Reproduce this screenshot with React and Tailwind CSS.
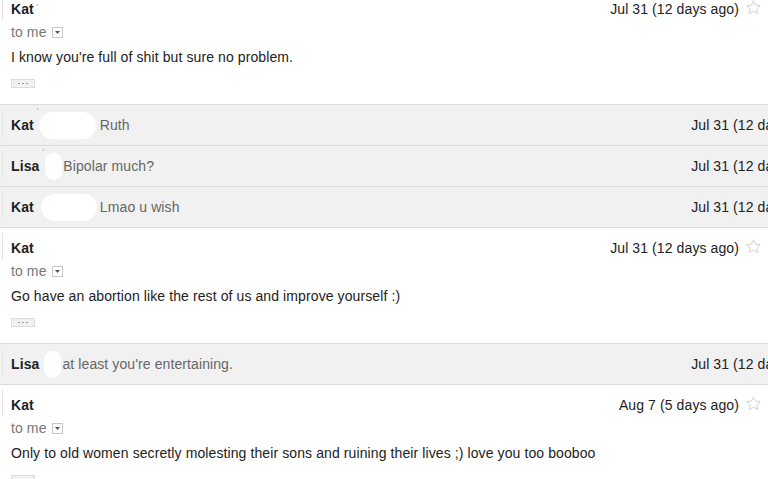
import React from 'react';

const messages = [
    { type: 'open', name: 'Kat', mark: true, date: 'Jul 31 (12 days ago)', body: "I know you're full of shit but sure no problem." },
    { type: 'closed', name: 'Kat', mark: true, blob: 'w-[57px]', gap: 'ml-0', sgap: 'ml-[4px]', snippet: 'Ruth', date: 'Jul 31 (12 days ago)' },
    { type: 'closed', name: 'Lisa', mark: true, blob: 'w-[17px]', gap: 'ml-[1px]', sgap: 'ml-[1px]', snippet: 'Bipolar much?', date: 'Jul 31 (12 days ago)' },
    { type: 'closed', name: 'Kat', blob: 'w-[56px]', gap: 'ml-[7px]', sgap: 'ml-[3px]', snippet: 'Lmao u wish', date: 'Jul 31 (12 days ago)' },
    { type: 'open', name: 'Kat', date: 'Jul 31 (12 days ago)', body: 'Go have an abortion like the rest of us and improve yourself :)' },
    { type: 'closed', name: 'Lisa', blob: 'w-[17px]', gap: 'ml-[5px]', sgap: 'ml-[1px]', snippet: "at least you're entertaining.", date: 'Jul 31 (12 days ago)' },
    { type: 'open', name: 'Kat', date: 'Aug 7 (5 days ago)', body: 'Only to old women secretly molesting their sons and ruining their lives ;) love you too booboo' },
];

const Star = () => (
    <svg width="17" height="17" viewBox="0 0 24 24" fill="none" stroke="#d2d2d2" strokeWidth="1.4" strokeLinejoin="round">
        <path d="M12 2.5l2.9 6.1 6.6.8-4.9 4.5 1.3 6.6L12 17.2l-5.9 3.3 1.3-6.6-4.9-4.5 6.6-.8z" />
    </svg>
);

const EdgeLine = () => <div className="w-px h-[27px] ml-[2px] mt-[5px] bg-[#e3e3e3] shrink-0" />;

const Mark = () => <span className="text-[#aaa] text-[9px] leading-none self-start mt-[2px] ml-[3px]">'</span>;

const OpenMessage = ({ m }) => (
    <div className="flex bg-white border-b border-[#dcdcdc] h-[116px]">
        <EdgeLine />
        <div className="flex-1 pl-[8px] pt-[12px]">
            <div className="flex items-center h-[16px]">
                <span className="font-bold text-[#222]">{m.name}</span>
                {m.mark && <Mark />}
                <div className="flex-1" />
                <span className="text-[#222]">{m.date}</span>
                <span className="ml-[6px] mr-[6px] -mt-[4px]"><Star /></span>
            </div>
            <div className="flex items-center h-[16px] mt-[7px] text-[#777]">
                <span>to me</span>
                <span className="ml-[5px] w-[11px] h-[11px] border border-[#c8c8c8] bg-white flex items-center justify-center">
                    <svg width="5" height="3" viewBox="0 0 5 3"><path d="M0 0h5L2.5 3z" fill="#555" /></svg>
                </span>
            </div>
            <div className="h-[16px] mt-[9px] text-[#222]">{m.body}</div>
            <div className="mt-[14px] w-[24px] h-[9px] bg-[#f1f1f1] border border-[#dcdcdc] flex items-center justify-center gap-[2px]">
                <span className="w-[2px] h-px bg-[#999]" />
                <span className="w-[2px] h-px bg-[#999]" />
                <span className="w-[2px] h-px bg-[#999]" />
            </div>
        </div>
    </div>
);

const ClosedMessage = ({ m }) => (
    <div className="flex bg-[#f1f1f1] border-b border-[#dcdcdc] h-[41px] w-[832px]">
        <EdgeLine />
        <div className="flex-1 flex items-center pl-[8px] pr-[12px]">
            <span className="font-bold text-[#222]">{m.name}</span>
            {m.mark && <Mark />}
            <span className={`${m.gap} ${m.blob} h-[27px] bg-white rounded-full shrink-0`} />
            <span className={`${m.sgap} text-[#666]`}>{m.snippet}</span>
            <div className="flex-1" />
            <span className="text-[#222]">{m.date}</span>
        </div>
    </div>
);

const App = () => {
    return (
        <div className="w-[768px] h-[479px] overflow-hidden bg-white text-[14px] leading-4 tracking-[0.1px]" style={{ fontFamily: '"Liberation Sans", Arial, sans-serif' }}>
            <div className="-mt-[11px]">
                {messages.map((m, i) =>
                    m.type === 'open' ? <OpenMessage key={i} m={m} /> : <ClosedMessage key={i} m={m} />
                )}
            </div>
        </div>
    );
};

export default App;
